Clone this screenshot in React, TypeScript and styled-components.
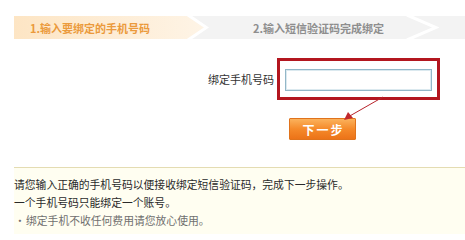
import React from "react";
import styled, { createGlobalStyle } from "styled-components";

const Global = createGlobalStyle`
  html, body { margin: 0; padding: 0; background: #ffffff; }
  body { font-family: "Noto Sans CJK SC", "Noto Sans", sans-serif; }
  * { box-sizing: border-box; }
`;

const Page = styled.div`
  width: 465px;
  height: 234px;
  padding: 16px 0 0 14px;
  overflow: hidden;
`;

const StepBar = styled.div`
  position: relative;
  display: flex;
  height: 23px;
  background: #f3f3f3;
`;

const Step = styled.div<{ $active?: boolean; $width?: number; $indent: number }>`
  position: relative;
  display: flex;
  align-items: center;
  flex: ${(p) => (p.$width ? `0 0 ${p.$width}px` : "1 1 auto")};
  padding-left: ${(p) => p.$indent}px;
  font-size: 11px;
  font-weight: 700;
  color: ${(p) => (p.$active ? "#eb9a3c" : "#8e8e8e")};
  white-space: nowrap;
`;

const StepLabel = styled.span`
  position: relative;
  z-index: 1;
`;

const StepShape = styled.svg`
  position: absolute;
  left: 0;
  top: 0;
`;

const Chevron = styled.svg<{ $right: number }>`
  position: absolute;
  top: 0;
  right: ${(p) => p.$right}px;
`;

const FormArea = styled.div`
  position: relative;
  padding-top: 19px;
`;

const FormRow = styled.div`
  display: flex;
  align-items: center;
  padding-left: 194px;
`;

const FieldLabel = styled.label`
  font-size: 11px;
  color: #333333;
  margin-right: 3px;
  white-space: nowrap;
`;

const Highlight = styled.div`
  display: flex;
  align-items: center;
  justify-content: center;
  width: 163px;
  height: 42px;
  padding-top: 2px;
  border: 3px solid #b3161f;
`;

const PhoneInput = styled.input`
  width: 147px;
  height: 22px;
  border: 1px solid #93b7c8;
  box-shadow: inset 0 0 0 1px #dbe9ef;
  outline: none;
  background: #ffffff;
`;

const ButtonRow = styled.div`
  display: flex;
  padding: 18px 0 0 275px;
`;

const NextButton = styled.button`
  width: 67px;
  height: 22px;
  border: 1px solid #e0731c;
  border-radius: 1px;
  background: linear-gradient(to bottom, #fbb25c 0%, #f58a2a 50%, #ec7318 100%);
  color: #ffffff;
  font-family: "Noto Sans CJK SC", sans-serif;
  font-size: 12px;
  font-weight: 700;
  letter-spacing: 2px;
  padding: 0 0 0 2px;
  cursor: pointer;
`;

const Pointer = styled.svg`
  position: absolute;
  left: 326px;
  top: 58px;
  overflow: visible;
`;

const Notice = styled.div`
  margin-top: 27px;
  border-top: 1px solid #e4dcb2;
  background: #fffef1;
  padding-top: 7px;
  height: 80px;
  font-size: 10.8px;
  line-height: 18px;
`;

const NoticeLine = styled.div<{ $muted?: boolean }>`
  display: flex;
  color: ${(p) => (p.$muted ? "#6f6f6f" : "#2a2a2a")};
  white-space: nowrap;
`;

const Bullet = styled.span`
  width: 12px;
  text-align: center;
`;

export default function App() {
  return (
    <>
      <Global />
      <Page>
        <StepBar>
          <Step $active $width={195} $indent={16}>
            <StepShape width="195" height="23" viewBox="0 0 195 23">
              <defs>
                <linearGradient id="stepGrad" x1="0" x2="1" y1="0" y2="0">
                  <stop offset="0" stopColor="#fde5c4" />
                  <stop offset="1" stopColor="#fef4e6" />
                </linearGradient>
              </defs>
              <polygon points="0,0 173,0 191,11.5 173,23 0,23" fill="url(#stepGrad)" />
              <polyline points="174,-1 192.5,11.5 174,24" fill="none" stroke="#ffffff" strokeWidth="3" />
            </StepShape>
            <StepLabel>1.输入要绑定的手机号码</StepLabel>
          </Step>
          <Step $indent={44}>
            <StepLabel>2.输入短信验证码完成绑定</StepLabel>
          </Step>
          <Chevron $right={26} width="34" height="23" viewBox="0 0 34 23">
            <polyline points="2,-1 31,11.5 2,24" fill="none" stroke="#ffffff" strokeWidth="3" />
          </Chevron>
        </StepBar>

        <FormArea>
          <FormRow>
            <FieldLabel htmlFor="phone">绑定手机号码</FieldLabel>
            <Highlight>
              <PhoneInput id="phone" type="text" />
            </Highlight>
          </FormRow>
          <ButtonRow>
            <NextButton type="button">下一步</NextButton>
          </ButtonRow>
          <Pointer width="44" height="26" viewBox="0 0 44 26">
            <line x1="43" y1="0" x2="8" y2="20" stroke="#b8232a" strokeWidth="1" />
            <polygon points="4,23 8,15 13,21" fill="#c0282c" />
          </Pointer>
        </FormArea>

        <Notice>
          <NoticeLine>请您输入正确的手机号码以便接收绑定短信验证码，完成下一步操作。</NoticeLine>
          <NoticeLine>一个手机号码只能绑定一个账号。</NoticeLine>
          <NoticeLine $muted>
            <Bullet>·</Bullet>
            <span>绑定手机不收任何费用请您放心使用。</span>
          </NoticeLine>
        </Notice>
      </Page>
    </>
  );
}
